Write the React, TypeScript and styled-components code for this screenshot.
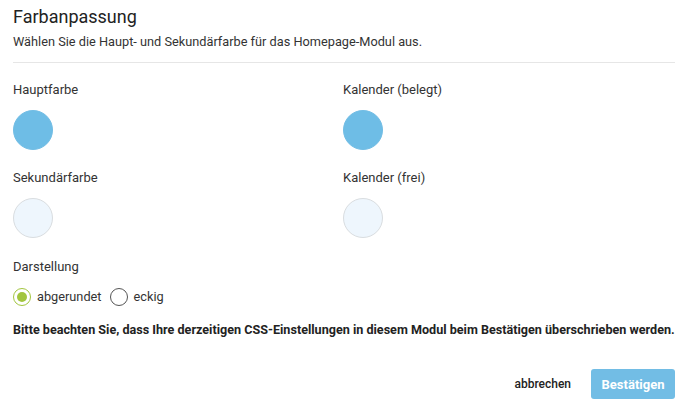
import React, { useState } from "react";
import styled, { createGlobalStyle } from "styled-components";

const Global = createGlobalStyle`
  html, body { margin: 0; padding: 0; background: #ffffff; }
  body { font-family: Roboto, "Liberation Sans", Arial, sans-serif; color: #333333; }
  * { box-sizing: border-box; }
`;

const Dialog = styled.div`
  width: 688px;
  padding: 6px 13px 0 13px;
  display: flex;
  flex-direction: column;
`;

const Title = styled.h2`
  margin: 0;
  font-size: 18px;
  line-height: 22px;
  font-weight: 400;
  color: #222222;
`;

const Subtitle = styled.p`
  margin: 5px 0 0 0;
  font-size: 12.75px;
  line-height: 18px;
  color: #333333;
`;

const Divider = styled.hr`
  margin: 11px 0 0 0;
  border: none;
  height: 1px;
  background: #e6e6e6;
`;

const ColorGrid = styled.div`
  margin-top: 18px;
  display: grid;
  grid-template-columns: 330px 1fr;
  row-gap: 19px;
`;

const Field = styled.div`
  display: flex;
  flex-direction: column;
  gap: 11px;
`;

const Label = styled.span`
  font-size: 13px;
  line-height: 18px;
  color: #333333;
`;

const Swatch = styled.button<{ $color: string; $light?: boolean }>`
  width: 40px;
  height: 40px;
  border-radius: 50%;
  padding: 0;
  background: ${(p) => p.$color};
  border: 1px solid ${(p) => (p.$light ? "#d9dde0" : "#72bde5")};
  cursor: pointer;
`;

const Section = styled.div`
  margin-top: 20px;
  display: flex;
  flex-direction: column;
  gap: 11px;
`;

const RadioRow = styled.div`
  display: flex;
  align-items: center;
  gap: 8px;
  height: 20px;
`;

const RadioOption = styled.label`
  display: flex;
  align-items: center;
  gap: 6px;
  font-size: 12.75px;
  line-height: 18px;
  color: #333333;
  cursor: pointer;
`;

const RadioCircle = styled.span<{ $checked: boolean }>`
  width: 18px;
  height: 18px;
  border-radius: 50%;
  border: 1.5px solid ${(p) => (p.$checked ? "#a2c53e" : "#555555")};
  display: flex;
  align-items: center;
  justify-content: center;
  &::after {
    content: "";
    width: 10px;
    height: 10px;
    border-radius: 50%;
    background: ${(p) => (p.$checked ? "#a2c53e" : "transparent")};
  }
`;

const Notice = styled.p`
  margin: 14px 0 0 0;
  font-size: 12.6px;
  line-height: 18px;
  font-weight: 700;
  color: #222222;
  white-space: nowrap;
`;

const Footer = styled.div`
  margin-top: 30px;
  display: flex;
  justify-content: flex-end;
  align-items: center;
  gap: 20px;
`;

const TextButton = styled.button`
  background: none;
  border: none;
  padding: 0;
  font-family: inherit;
  font-size: 12px;
  font-weight: 500;
  color: #222222;
  cursor: pointer;
`;

const PrimaryButton = styled.button`
  width: 84px;
  height: 30px;
  border: none;
  border-radius: 3px;
  background: #72bde5;
  color: #ffffff;
  font-family: inherit;
  font-size: 13px;
  font-weight: 700;
  cursor: pointer;
`;

const fields = [
  { label: "Hauptfarbe", color: "#6ebde6", light: false },
  { label: "Kalender (belegt)", color: "#6ebde6", light: false },
  { label: "Sekundärfarbe", color: "#eef6fd", light: true },
  { label: "Kalender (frei)", color: "#eef6fd", light: true },
];

export default function App() {
  const [shape, setShape] = useState<"round" | "square">("round");
  return (
    <>
      <Global />
      <Dialog>
        <Title>Farbanpassung</Title>
        <Subtitle>Wählen Sie die Haupt- und Sekundärfarbe für das Homepage-Modul aus.</Subtitle>
        <Divider />
        <ColorGrid>
          {fields.map((f) => (
            <Field key={f.label}>
              <Label>{f.label}</Label>
              <Swatch $color={f.color} $light={f.light} aria-label={f.label} />
            </Field>
          ))}
        </ColorGrid>
        <Section>
          <Label>Darstellung</Label>
          <RadioRow>
            <RadioOption onClick={() => setShape("round")}>
              <RadioCircle $checked={shape === "round"} />
              abgerundet
            </RadioOption>
            <RadioOption onClick={() => setShape("square")}>
              <RadioCircle $checked={shape === "square"} />
              eckig
            </RadioOption>
          </RadioRow>
        </Section>
        <Notice>
          Bitte beachten Sie, dass Ihre derzeitigen CSS-Einstellungen in diesem Modul beim Bestätigen überschrieben werden.
        </Notice>
        <Footer>
          <TextButton>abbrechen</TextButton>
          <PrimaryButton>Bestätigen</PrimaryButton>
        </Footer>
      </Dialog>
    </>
  );
}
